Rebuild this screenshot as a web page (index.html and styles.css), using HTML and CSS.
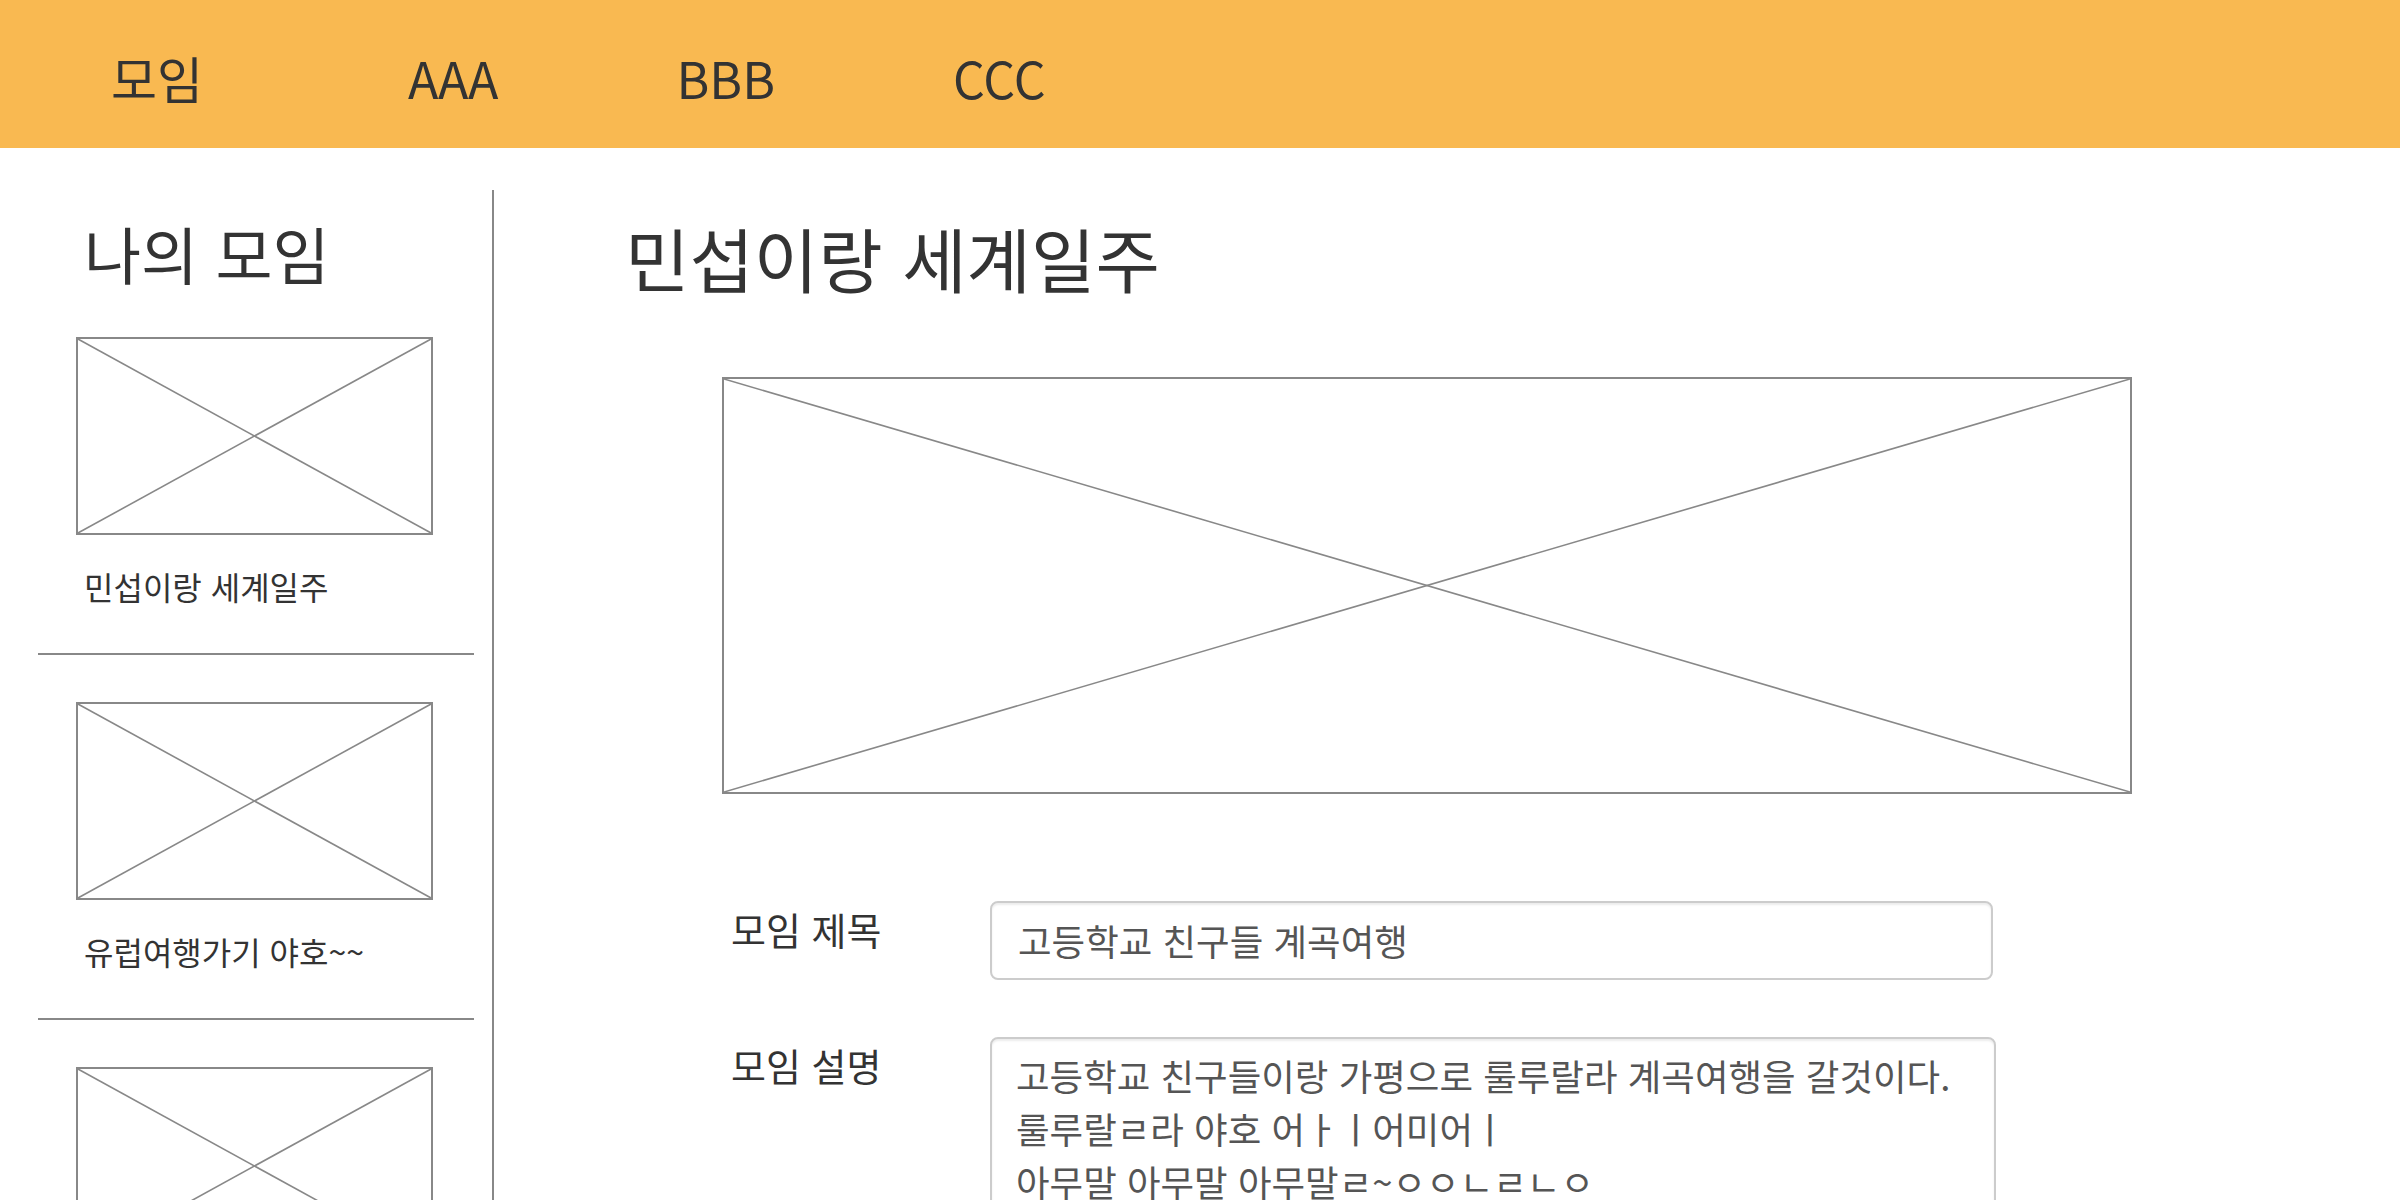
FILE: index.html
```html
<!DOCTYPE html>
<html lang="ko">
<head>
<meta charset="utf-8">
<title>모임</title>
<link rel="stylesheet" href="styles.css">
</head>
<body>
<header class="topbar">
  <nav class="nav">
    <a class="nav-item nav-logo">모임</a>
    <a class="nav-item">AAA</a>
    <a class="nav-item">BBB</a>
    <a class="nav-item">CCC</a>
  </nav>
</header>
<div class="layout">
  <aside class="sidebar">
    <h2 class="sidebar-title">나의 모임</h2>
    <ul class="group-list">
      <li class="group-item">
        <div class="thumb"><svg class="ph" viewBox="0 0 100 100" preserveAspectRatio="none"><line x1="0" y1="0" x2="100" y2="100"/><line x1="100" y1="0" x2="0" y2="100"/></svg></div>
        <p class="group-name">민섭이랑 세계일주</p>
      </li>
      <li class="group-item">
        <div class="thumb"><svg class="ph" viewBox="0 0 100 100" preserveAspectRatio="none"><line x1="0" y1="0" x2="100" y2="100"/><line x1="100" y1="0" x2="0" y2="100"/></svg></div>
        <p class="group-name">유럽여행가기 야호~~</p>
      </li>
      <li class="group-item">
        <div class="thumb"><svg class="ph" viewBox="0 0 100 100" preserveAspectRatio="none"><line x1="0" y1="0" x2="100" y2="100"/><line x1="100" y1="0" x2="0" y2="100"/></svg></div>
      </li>
    </ul>
  </aside>
  <main class="main">
    <h1 class="page-title">민섭이랑 세계일주</h1>
    <div class="content">
      <div class="cover"><svg class="ph" viewBox="0 0 100 100" preserveAspectRatio="none"><line x1="0" y1="0" x2="100" y2="100"/><line x1="100" y1="0" x2="0" y2="100"/></svg></div>
      <form class="form">
        <div class="form-row">
          <label class="form-label">모임 제목</label>
          <input class="form-control" type="text" value="고등학교 친구들 계곡여행">
        </div>
        <div class="form-row">
          <label class="form-label">모임 설명</label>
          <textarea class="form-control form-textarea">고등학교 친구들이랑 가평으로 룰루랄라 계곡여행을 갈것이다.
룰루랄ㄹ라 야호 어ㅏㅣ어미어ㅣ
아무말 아무말 아무말ㄹ~ㅇㅇㄴㄹㄴㅇ</textarea>
        </div>
      </form>
    </div>
  </main>
</div>
</body>
</html>
```
FILE: styles.css
```css
* { box-sizing: border-box; }
html, body {
  margin: 0;
  padding: 0;
  height: 100%;
  overflow: hidden;
}
body {
  font-family: "Noto Sans CJK KR", "Noto Sans", sans-serif;
  color: #333;
  background: #fff;
}

.topbar {
  height: 148px;
  background: #f9b951;
  display: flex;
  align-items: center;
  padding-left: 111px;
  padding-top: 6px;
}
.nav {
  display: flex;
  align-items: center;
  gap: 178px;
}
.nav-item {
  font-size: 50px;
  color: #333;
  text-decoration: none;
}
.nav-logo { margin-right: 27px; }

.layout {
  display: flex;
  height: calc(100vh - 148px);
  overflow: hidden;
}

.sidebar {
  flex: 0 0 494px;
  margin-top: 42px;
  padding: 0 18px 0 38px;
  border-right: 2px solid #888;
}
.sidebar-title {
  margin: 19px 0 0 46px;
  font-size: 62px;
  font-weight: 400;
  line-height: 1.448;
}
.group-list {
  list-style: none;
  margin: 0;
  padding: 0;
}
.group-item {
  padding: 47px 0 44px;
  border-bottom: 2px solid #888;
}
.group-item:first-child { padding-top: 38px; }

.thumb, .cover {
  border: 2px solid #888;
  background: #fff;
}
.thumb {
  margin-left: 38px;
  width: 357px;
  height: 198px;
}
.ph {
  display: block;
  width: 100%;
  height: 100%;
}
.ph line {
  stroke: #888;
  stroke-width: 1.6;
  vector-effect: non-scaling-stroke;
}
.group-name {
  margin: 28px 0 0 46px;
  font-size: 32px;
  line-height: 1.448;
}

.main {
  flex: 1;
  padding-left: 131px;
}
.page-title {
  margin: 59px 0 0;
  font-size: 70px;
  font-weight: 400;
  line-height: 1.448;
}
.content {
  margin-left: 97px;
  width: 1410px;
}
.cover {
  margin-top: 69px;
  height: 417px;
}
.form {
  margin-top: 107px;
  padding-left: 9px;
  display: flex;
  flex-direction: column;
  gap: 57px;
}
.form-row {
  display: flex;
  align-items: flex-start;
}
.form-label {
  flex: 0 0 259px;
  font-size: 38px;
  line-height: 1.448;
}
.form-control {
  font-family: "Noto Sans CJK KR", "Noto Sans", sans-serif;
  font-size: 36.5px;
  color: #555;
  border: 2px solid #ccc;
  border-radius: 8px;
  box-shadow: inset 0 2px 2px rgba(0,0,0,0.075);
  background: #fff;
  outline: none;
}
input.form-control {
  width: 1003px;
  height: 79px;
  padding: 0 26px;
}
.form-textarea {
  width: 1006px;
  height: 400px;
  padding: 10px 24px;
  line-height: 53px;
  resize: none;
  overflow: hidden;
}
```
